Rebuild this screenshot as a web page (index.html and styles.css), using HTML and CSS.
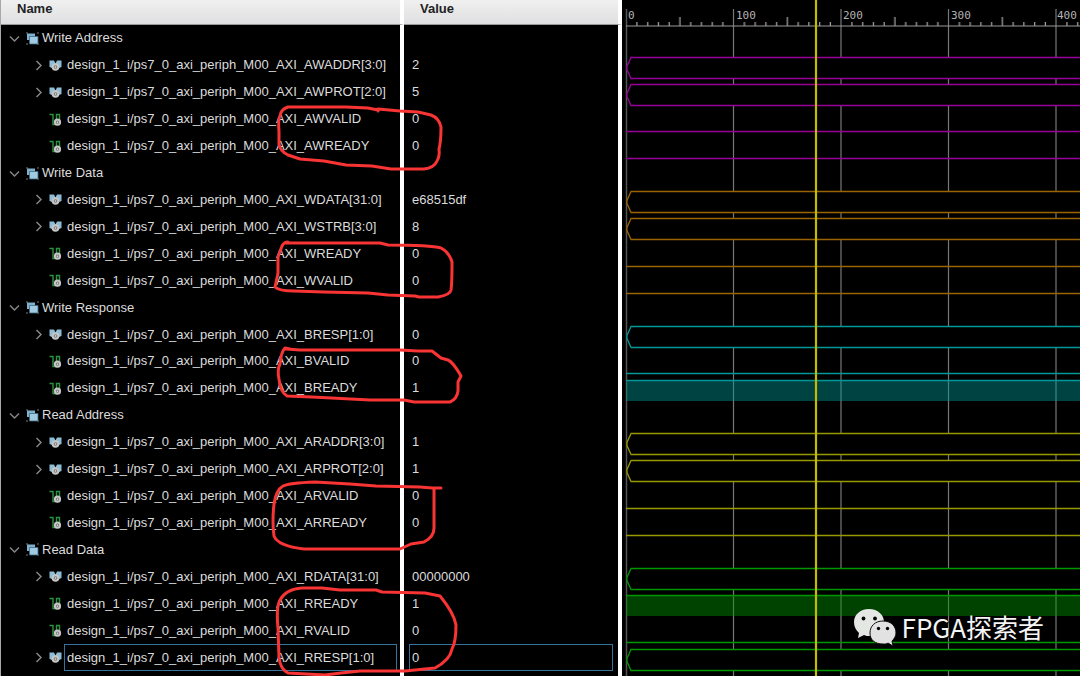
FILE: index.html
```html
<!DOCTYPE html>
<html lang="en">
<head>
<meta charset="utf-8">
<title>AXI waveform</title>
<link rel="stylesheet" href="styles.css">
</head>
<body>
<svg class="defs" aria-hidden="true">
  <symbol id="down" viewBox="0 0 11 11"><path d="M1 3.500 5.500 8 10 3.500" fill="none" stroke="#858585" stroke-width="1.500"/></symbol>
  <symbol id="right" viewBox="0 0 11 11"><path d="M3.500 1 8 5.500 3.500 10" fill="none" stroke="#858585" stroke-width="1.500"/></symbol>
  <symbol id="group" viewBox="0 0 13 13">
    <path d="M0 0h2v2H0zM11 0h2v2h-2zM0 11h2v2H0zM11 11h2v2h-2z" fill="#3c3c3c"/>
    <path d="M1 1.500h8v6.500H1z" fill="#7fb0cd"/>
    <path d="M3.500 4.500h8.500v7.500H3.500z" fill="#a0cae2" stroke="#3f6880" stroke-width=".8"/>
  </symbol>
  <symbol id="vector" viewBox="0 0 13 13">
    <path d="M.5 1.500h4.500l1.500 3L8 1.500h4.500V8L10 9H3L.5 8z" fill="#8fbdd6"/>
    <circle cx="6.500" cy="8" r="2.800" fill="#777" stroke="#c6c6c6" stroke-width="2"/>
    <circle cx="6.500" cy="8" r=".8" fill="#eee"/>
  </symbol>
  <symbol id="scalar" viewBox="0 0 13 13">
    <path d="M.5 1.500H4v10h3.500V1.500h3V7" fill="none" stroke="#2b9340" stroke-width="1.400"/>
    <circle cx="8.500" cy="9.200" r="2.600" fill="#777" stroke="#c6c6c6" stroke-width="2"/>
    <circle cx="8.500" cy="9.200" r=".7" fill="#eee"/>
  </symbol>
</svg>
<main class="viewer">
  <table class="signals">
    <thead><tr><th scope="col">Name</th><th scope="col">Value</th></tr></thead>
    <tbody>
      <tr class="group"><td><button aria-label="Collapse"><svg><use href="#down"/></svg></button><svg class="icon"><use href="#group"/></svg><span>Write Address</span></td><td></td></tr>
      <tr><td><button aria-label="Expand"><svg><use href="#right"/></svg></button><svg class="icon"><use href="#vector"/></svg><span>design_1_i/ps7_0_axi_periph_M00_AXI_AWADDR[3:0]</span></td><td><span>2</span></td></tr>
      <tr><td><button aria-label="Expand"><svg><use href="#right"/></svg></button><svg class="icon"><use href="#vector"/></svg><span>design_1_i/ps7_0_axi_periph_M00_AXI_AWPROT[2:0]</span></td><td><span>5</span></td></tr>
      <tr class="leaf"><td><svg class="icon"><use href="#scalar"/></svg><span>design_1_i/ps7_0_axi_periph_M00_AXI_AWVALID</span></td><td><span>0</span></td></tr>
      <tr class="leaf"><td><svg class="icon"><use href="#scalar"/></svg><span>design_1_i/ps7_0_axi_periph_M00_AXI_AWREADY</span></td><td><span>0</span></td></tr>
      <tr class="group"><td><button aria-label="Collapse"><svg><use href="#down"/></svg></button><svg class="icon"><use href="#group"/></svg><span>Write Data</span></td><td></td></tr>
      <tr><td><button aria-label="Expand"><svg><use href="#right"/></svg></button><svg class="icon"><use href="#vector"/></svg><span>design_1_i/ps7_0_axi_periph_M00_AXI_WDATA[31:0]</span></td><td><span>e68515df</span></td></tr>
      <tr><td><button aria-label="Expand"><svg><use href="#right"/></svg></button><svg class="icon"><use href="#vector"/></svg><span>design_1_i/ps7_0_axi_periph_M00_AXI_WSTRB[3:0]</span></td><td><span>8</span></td></tr>
      <tr class="leaf"><td><svg class="icon"><use href="#scalar"/></svg><span>design_1_i/ps7_0_axi_periph_M00_AXI_WREADY</span></td><td><span>0</span></td></tr>
      <tr class="leaf"><td><svg class="icon"><use href="#scalar"/></svg><span>design_1_i/ps7_0_axi_periph_M00_AXI_WVALID</span></td><td><span>0</span></td></tr>
      <tr class="group"><td><button aria-label="Collapse"><svg><use href="#down"/></svg></button><svg class="icon"><use href="#group"/></svg><span>Write Response</span></td><td></td></tr>
      <tr><td><button aria-label="Expand"><svg><use href="#right"/></svg></button><svg class="icon"><use href="#vector"/></svg><span>design_1_i/ps7_0_axi_periph_M00_AXI_BRESP[1:0]</span></td><td><span>0</span></td></tr>
      <tr class="leaf"><td><svg class="icon"><use href="#scalar"/></svg><span>design_1_i/ps7_0_axi_periph_M00_AXI_BVALID</span></td><td><span>0</span></td></tr>
      <tr class="leaf"><td><svg class="icon"><use href="#scalar"/></svg><span>design_1_i/ps7_0_axi_periph_M00_AXI_BREADY</span></td><td><span>1</span></td></tr>
      <tr class="group"><td><button aria-label="Collapse"><svg><use href="#down"/></svg></button><svg class="icon"><use href="#group"/></svg><span>Read Address</span></td><td></td></tr>
      <tr><td><button aria-label="Expand"><svg><use href="#right"/></svg></button><svg class="icon"><use href="#vector"/></svg><span>design_1_i/ps7_0_axi_periph_M00_AXI_ARADDR[3:0]</span></td><td><span>1</span></td></tr>
      <tr><td><button aria-label="Expand"><svg><use href="#right"/></svg></button><svg class="icon"><use href="#vector"/></svg><span>design_1_i/ps7_0_axi_periph_M00_AXI_ARPROT[2:0]</span></td><td><span>1</span></td></tr>
      <tr class="leaf"><td><svg class="icon"><use href="#scalar"/></svg><span>design_1_i/ps7_0_axi_periph_M00_AXI_ARVALID</span></td><td><span>0</span></td></tr>
      <tr class="leaf"><td><svg class="icon"><use href="#scalar"/></svg><span>design_1_i/ps7_0_axi_periph_M00_AXI_ARREADY</span></td><td><span>0</span></td></tr>
      <tr class="group"><td><button aria-label="Collapse"><svg><use href="#down"/></svg></button><svg class="icon"><use href="#group"/></svg><span>Read Data</span></td><td></td></tr>
      <tr><td><button aria-label="Expand"><svg><use href="#right"/></svg></button><svg class="icon"><use href="#vector"/></svg><span>design_1_i/ps7_0_axi_periph_M00_AXI_RDATA[31:0]</span></td><td><span>00000000</span></td></tr>
      <tr class="leaf"><td><svg class="icon"><use href="#scalar"/></svg><span>design_1_i/ps7_0_axi_periph_M00_AXI_RREADY</span></td><td><span>1</span></td></tr>
      <tr class="leaf"><td><svg class="icon"><use href="#scalar"/></svg><span>design_1_i/ps7_0_axi_periph_M00_AXI_RVALID</span></td><td><span>0</span></td></tr>
      <tr class="selected"><td><button aria-label="Expand"><svg><use href="#right"/></svg></button><svg class="icon"><use href="#vector"/></svg><span>design_1_i/ps7_0_axi_periph_M00_AXI_RRESP[1:0]</span></td><td><span>0</span></td></tr>
    </tbody>
  </table>
  <section class="waves" aria-label="Waveforms">
    <svg class="plot">
      <defs>
        <pattern id="ticks" width="107.500" height="26" patternUnits="userSpaceOnUse">
          <path d="M10.900 22v4M21.700 22v4M32.400 22v4M43.200 22v4M53.900 17v9M64.700 22v4M75.400 22v4M86.200 22v4M96.900 22v4" stroke="#aaa" stroke-width="1.200"/>
        </pattern>
        <g id="bus"><path d="M3000 0H5L1 9v3l4 9h2995" fill="#000" stroke="currentColor" stroke-width="1.300"/></g>
        <path id="low" d="M0 0h3000" stroke="currentColor" stroke-width="1.300"/>
        <g id="high"><path d="M0 0h3000v21H0z" fill="currentColor" opacity=".44"/><path d="M0 .5h3000" stroke="currentColor" stroke-width="1.600"/></g>
      </defs>
      <g transform="translate(4 0)">
        <path d="M107.500 9v700M215 9v700M322.500 9v700M430 9v700" stroke="#777" stroke-width="1.200"/>
        <path d="M.5 9v700" stroke="#555" stroke-width="1.500"/>
        <rect width="3000" height="26" fill="url(#ticks)"/>
        <path d="M0 26h3000" stroke="#999" stroke-width="1.200"/>
        <g class="ruler"><text x="2" y="19">0</text><text x="110" y="19">100</text><text x="217" y="19">200</text><text x="325" y="19">300</text><text x="431" y="19">400</text></g>
        <g color="#980098"><use href="#bus" y="57.500"/><use href="#bus" y="84.500"/><use href="#low" y="131.500"/><use href="#low" y="158.500"/></g>
        <g color="#9c6400"><use href="#bus" y="191.500"/><use href="#bus" y="218.500"/><use href="#low" y="266.500"/><use href="#low" y="293.500"/></g>
        <g color="#009898"><use href="#bus" y="326.500"/><use href="#low" y="373.500"/><use href="#high" y="380"/></g>
        <g color="#989800"><use href="#bus" y="433.500"/><use href="#bus" y="460.500"/><use href="#low" y="508.500"/><use href="#low" y="535.500"/></g>
        <g color="#009800"><use href="#bus" y="568.500"/><use href="#high" y="595"/><use href="#low" y="642.500"/><use href="#bus" y="649.500"/></g>
        <path d="M190 0v3000" stroke="#c2bb00" stroke-width="2.200"/>
      </g>
    </svg>
  </section>
  <svg class="marks" aria-hidden="true">
    <path d="M378 110 368 108 346 107 288 107Q281 109 280 116Q278 119 279 132V144Q280 151 288 155L300 159 324 161 346 165 372 166 391 169H424Q434 168 437 161Q440 156 439 149Q441 142 441 127Q439 118 431 115L418 112 400 111 378 109V111"/>
    <path d="M288 242Q284 242 282 246L278 257V273L275 287Q279 291 294 291L324 292 368 293 388 295 415 296 419 297H438Q450 295 451 290Q452 284 452 262Q449 252 441 248Q431 245 388 245L380 243H286"/>
    <path d="M290 349 285 348Q281 352 280 364Q277 370 279 379Q280 392 287 396L312 397 370 400 404 400 414 402H450Q457 399 458 391V382L461 376Q453 362 448 360L441 358 432 351 418 351 400 350H300L286 349"/>
    <path d="M441 488H432L420 487 376 486 350 484 315 482Q289 483 283 486Q276 490 274 504Q272 522 274 536Q278 546 304 549H400L411 544 424 542Q434 537 434 528V489"/>
    <path d="M440 596 425 593 382 592 376 590 340 590 322 588H302Q286 589 280 600Q276 607 278 628L279 657Q280 669 288 673L325 675 341 673 360 671H405L435 668Q450 660 452 649Q456 642 456 625Q454 613 440 596"/>
  </svg>
  <div class="watermark">
    <svg viewBox="0 0 42 37" aria-hidden="true">
      <path d="M15 0C6 0 0 6 0 13c0 5 2 8 5 11l-1 5 6-3c2 1 3 1 6 1l14-14C30 6 24 0 15 0z" fill="#e4e7e4"/>
      <path d="M29 12c-8 0-13 5-13 12s5 11 13 11c2 0 4 0 5-1l5 3-1-5c2-2 4-5 4-8 0-7-5-12-13-12z" fill="#e2e2e2" stroke="#111" stroke-width="1"/>
      <g fill="#050505"><circle cx="9.500" cy="9.500" r="1.900"/><circle cx="21" cy="9.500" r="1.900"/><circle cx="24.500" cy="19.500" r="1.700"/><circle cx="33.500" cy="19.500" r="1.700"/></g>
    </svg>
    <span>FPGA探索者</span>
  </div>
</main>
</body>
</html>
```
FILE: styles.css
```css
* { box-sizing: border-box; }

body {
  margin: 0;
  background: #000;
  color: #dcdcdc;
  font: 13px/16px "Liberation Sans", Arial, sans-serif;
}

.defs { display: none; }

.viewer {
  position: relative;
  display: flex;
  min-height: 100vh;
  overflow: hidden;
}

.signals {
  flex: none;
  display: flex;
  flex-direction: column;
  padding-bottom: 5px;
  border-left: 1px solid #a8a8a8;
  background: linear-gradient(#fff, #fff) 399px 0 / 4px 100% no-repeat,
    linear-gradient(#fff, #fff) right 0 top 0 / 4px 100% no-repeat;
}

.signals tr {
  display: grid;
  grid-template-columns: 403px 218px;
}

.signals th {
  height: 25px;
  padding: 1px 16px 0;
  border-right: 4px solid #fff;
  border-bottom: 1px solid #999;
  background: linear-gradient(#f0f0f0, #dfdfe1);
  color: #222;
  text-align: left;
  vertical-align: top;
}

.signals tbody {
  flex: 1;
  display: grid;
  grid-auto-rows: 1fr;
}

.signals td {
  display: flex;
  align-items: center;
  padding: 0 7px 0 32px;
  white-space: nowrap;
}

.signals .group td { padding-left: 8px; }
.signals .leaf td { padding-left: 48px; }

.signals td:last-child,
.signals .group td:last-child { padding: 0 9px 0 5px; }

.signals span {
  flex: 1;
  align-self: stretch;
  display: flex;
  align-items: center;
  padding: 0 2px;
  border: 1px solid transparent;
}

.signals .group span { padding-left: 0; }

.signals .selected span { border-color: #34749f; }

.signals button {
  flex: none;
  width: 11px;
  height: 11px;
  margin-right: 5px;
  padding: 0;
  border: 0;
  background: none;
}

.signals .group button { margin-right: 6px; }

.signals button svg {
  display: block;
  width: 11px;
  height: 11px;
}

.icon {
  flex: none;
  width: 13px;
  height: 13px;
  margin-right: 2px;
}

.waves {
  flex: 1;
  min-width: 0;
  display: flex;
}

.plot {
  flex: 1;
  min-width: 0;
}

.ruler {
  fill: #b4b4b4;
  font: 11px "DejaVu Sans Mono", monospace;
}

.marks {
  position: absolute;
  inset: 0;
  width: 100%;
  height: 100%;
  fill: none;
  stroke: #f83434;
  stroke-width: 3;
  stroke-linejoin: round;
  stroke-linecap: round;
  pointer-events: none;
}

.watermark {
  position: absolute;
  right: 36px;
  bottom: 30px;
  display: flex;
  align-items: center;
  gap: 6px;
  color: #f4f4f4;
  font: 26px/38px "Noto Sans CJK SC", sans-serif;
  text-shadow: 1px 1px 1px #000;
}

.watermark svg {
  width: 42px;
  height: 37px;
}
```
